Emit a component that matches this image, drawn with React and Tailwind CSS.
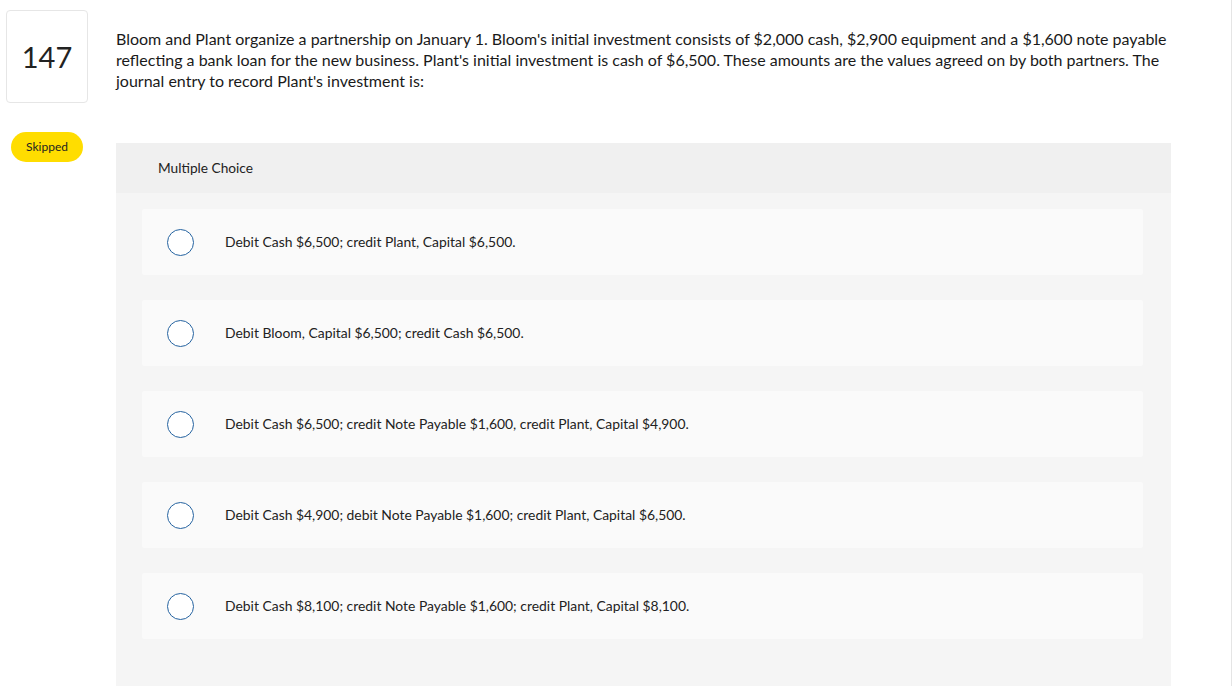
const OPTIONS = [
  'Debit Cash $6,500; credit Plant, Capital $6,500.',
  'Debit Bloom, Capital $6,500; credit Cash $6,500.',
  'Debit Cash $6,500; credit Note Payable $1,600, credit Plant, Capital $4,900.',
  'Debit Cash $4,900; debit Note Payable $1,600; credit Plant, Capital $6,500.',
  'Debit Cash $8,100; credit Note Payable $1,600; credit Plant, Capital $8,100.',
];

export default function App() {
  return (
    <div
      className="w-[1232px] h-[686px] overflow-hidden bg-white text-[#1a1a1a] flex border-r border-[#e5e5e5]"
      style={{ fontFamily: 'Lato, "Open Sans", sans-serif' }}
    >
      {/* left column */}
      <div className="w-[116px] shrink-0 flex flex-col pl-[6px] pt-[10px]">
        <div className="w-[82px] h-[93px] border border-[#e6e6e6] rounded-[4px] flex items-center justify-center text-[29px] text-[#222]">
          147
        </div>
        <div className="mt-[29px] ml-[5px] w-[72px] h-[30px] rounded-full bg-[#ffdd00] flex items-center justify-center text-[12px] text-[#222]">
          Skipped
        </div>
      </div>

      {/* main column */}
      <div className="flex-1 flex flex-col pr-[60px]">
        <p className="pt-[28px] text-[16px] leading-[21px] text-[#1a1a1a] pr-[2px]">
          Bloom and Plant organize a partnership on January 1. Bloom's initial investment consists of $2,000 cash,
          $2,900 equipment and a $1,600 note payable reflecting a bank loan for the new business. Plant's initial
          investment is cash of $6,500. These amounts are the values agreed on by both partners. The journal entry to
          record Plant's investment is:
        </p>

        <div className="mt-[52px] flex-1 bg-[#f5f5f5] flex flex-col">
          <div className="h-[50px] bg-[#f0f0f0] flex items-center pl-[42px] text-[13.7px] text-[#222]">
            Multiple Choice
          </div>
          <div className="flex flex-col gap-[25px] pt-[16px] pl-[26px] pr-[28px]">
            {OPTIONS.map((opt) => (
              <div key={opt} className="h-[66px] bg-[#fafafa] rounded-[2px] flex items-center pl-[25px]">
                <span className="w-[27px] h-[27px] rounded-full border-[1.5px] border-[#2563a0] bg-white shrink-0" />
                <span className="ml-[31px] text-[13.9px] text-[#222]">{opt}</span>
              </div>
            ))}
          </div>
        </div>
      </div>
    </div>
  );
}
